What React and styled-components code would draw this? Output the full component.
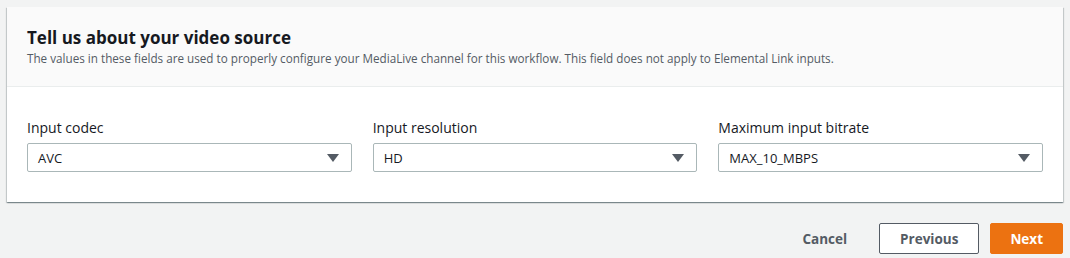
import React from 'react'
import styled, {createGlobalStyle} from 'styled-components'

const GlobalStyle = createGlobalStyle`
  body {
    margin: 0;
    background: #f2f3f3;
    font-family: "Open Sans", "Noto Sans", sans-serif;
    color: #16191f;
  }
`

const Page = styled.div`
  padding: 7px 7px 0 7px;
`

const Card = styled.div`
  background: #fff;
  box-shadow: 0 1px 1px 0 rgba(0, 28, 36, 0.3), 1px 1px 1px 0 rgba(0, 28, 36, 0.15), -1px 1px 1px 0 rgba(0, 28, 36, 0.15);
`

const Header = styled.div`
  background: #fafafa;
  border-bottom: 1px solid #eaeded;
  padding: 19px 20px 19px;
`

const Title = styled.h2`
  margin: 0;
  font-size: 17px;
  font-weight: 700;
  line-height: 24px;
`

const Description = styled.p`
  margin: 0;
  font-size: 11.7px;
  line-height: 17px;
  color: #545b64;
`

const Body = styled.div`
  display: grid;
  grid-template-columns: repeat(3, 1fr);
  gap: 21px;
  padding: 31px 20px 30px;
`

const Field = styled.div`
  display: flex;
  flex-direction: column;
`

const Label = styled.label`
  font-size: 14px;
  line-height: 20px;
  margin-bottom: 5px;
`

const Select = styled.div`
  display: flex;
  align-items: center;
  justify-content: space-between;
  height: 29px;
  box-sizing: border-box;
  border: 1px solid #aab7b8;
  border-radius: 2px;
  padding: 0 12px 0 10px;
  font-size: 13px;
  background: #fff;
`

const Footer = styled.div`
  display: flex;
  justify-content: flex-end;
  align-items: center;
  gap: 11px;
  padding: 21px 0 0;
`

const Button = styled.button`
  font-family: inherit;
  font-size: 13.5px;
  font-weight: 700;
  height: 31px;
  padding: 0 ${p => p.$pad}px;
  border-radius: 2px;
  cursor: pointer;
  border: 1px solid ${p => (p.$variant === 'primary' ? '#ec7211' : p.$variant === 'normal' ? '#545b64' : 'transparent')};
  background: ${p => (p.$variant === 'primary' ? '#ec7211' : p.$variant === 'normal' ? '#fff' : 'transparent')};
  color: ${p => (p.$variant === 'primary' ? '#fff' : '#545b64')};
`

const Caret = () => (
  <svg width="12" height="8" viewBox="0 0 12 8">
    <path d="M0 0 H12 L6 8 Z" fill="#545b64" />
  </svg>
)

const fields = [
  {label: 'Input codec', value: 'AVC'},
  {label: 'Input resolution', value: 'HD'},
  {label: 'Maximum input bitrate', value: 'MAX_10_MBPS'},
]

export default function App() {
  return (
    <Page>
      <GlobalStyle />
      <Card>
        <Header>
          <Title>Tell us about your video source</Title>
          <Description>
            The values in these fields are used to properly configure your MediaLive channel for this workflow. This field does not apply to Elemental Link inputs.
          </Description>
        </Header>
        <Body>
          {fields.map(f => (
            <Field key={f.label}>
              <Label>{f.label}</Label>
              <Select>
                <span>{f.value}</span>
                <Caret />
              </Select>
            </Field>
          ))}
        </Body>
      </Card>
      <Footer>
        <Button $variant="link" $pad={20}>Cancel</Button>
        <Button $variant="normal" $pad={20}>Previous</Button>
        <Button $variant="primary" $pad={19}>Next</Button>
      </Footer>
    </Page>
  )
}
